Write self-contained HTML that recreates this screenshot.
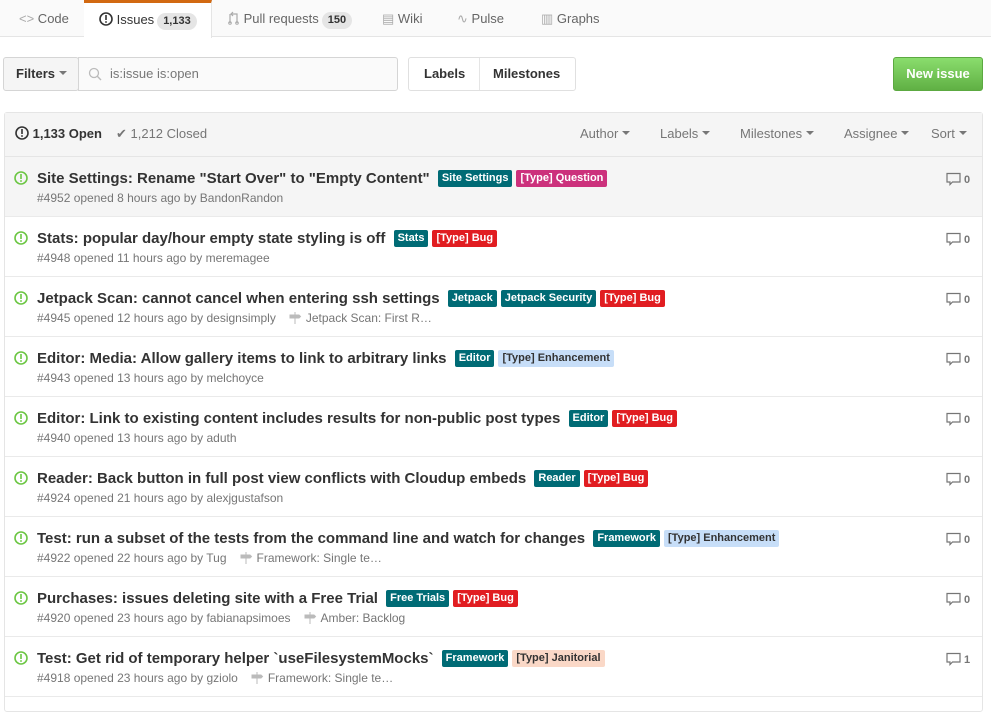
<!DOCTYPE html>
<html><head><meta charset="utf-8"><style>
*{box-sizing:border-box;margin:0;padding:0}
body{width:991px;height:695px;overflow:hidden;background:#fff;font-family:"Liberation Sans",Arial,sans-serif;color:#333;position:relative;font-size:13px}
.a{position:absolute;white-space:nowrap}
.tabs{position:absolute;left:0;top:0;width:991px;height:37px;background:#fafafa;border-bottom:1px solid #e5e5e5}
.tab{position:absolute;top:0;height:37px;line-height:37px;font-size:13px;color:#666}
.cnt{display:inline-block;background:#e5e5e5;border-radius:10px;padding:0 6px;font-size:11px;font-weight:bold;line-height:17px;color:#333;margin-left:3px}
.btn{position:absolute;border:1px solid #d5d5d5;border-radius:3px;background:#f5f5f5;font-weight:bold;font-size:13px;line-height:32px;color:#333}
.box{position:absolute;left:4px;top:112px;width:979px;height:600px;border:1px solid #e5e5e5;border-radius:3px}
.hdr{position:absolute;left:0;top:0;width:977px;height:44px;background:#f5f5f5;border-bottom:1px solid #e5e5e5}
.row{position:absolute;left:0;width:977px;height:60px;border-bottom:1px solid #eaeaea}
.t{position:absolute;left:32px;top:13px;font-size:15px;font-weight:bold;color:#333;white-space:nowrap;letter-spacing:0}
.l{display:inline-block;font-size:11px;font-weight:bold;line-height:17px;padding:0 4px;border-radius:2px;color:#fff;vertical-align:2px;margin-left:4px;letter-spacing:0}
.tl{background:#006b75}.bug{background:#e11d21}.q{background:#cc317c}.enh{background:#c7def8;color:#333}.jan{background:#fad8c7;color:#333}
.m{position:absolute;left:32px;top:34px;font-size:12px;color:#767676;white-space:nowrap}
.ic{position:absolute;left:9px;top:14px}
.cm{position:absolute;left:941px;top:15px;font-size:11px;font-weight:bold;color:#767676}
.dd::after{content:"";display:inline-block;border:4px solid transparent;border-top-color:#777;border-bottom:0;margin-left:4px;vertical-align:3px}
</style></head><body>
<div class="tabs">
 <div class="tab" style="left:19px"><span style="color:#aaa">&lt;&gt;</span> Code</div>
 <div class="tab" style="left:84px;width:128px;background:#fff;border-top:3px solid #d26911;border-right:1px solid #e5e5e5;height:38px;line-height:33px;color:#333;padding-left:15px"><svg width="14" height="14" viewBox="0 0 14 14" style="vertical-align:-2px"><circle cx="7" cy="7" r="6" fill="none" stroke="#333" stroke-width="1.6"/><rect x="6.2" y="3" width="1.6" height="5" fill="#333"/><rect x="6.2" y="9.2" width="1.6" height="1.6" fill="#333"/></svg> Issues<span class="cnt">1,133</span></div>
 <div class="tab" style="left:228px"><svg width="12" height="14" viewBox="0 0 12 14" style="vertical-align:-2px"><path d="M2 3v9M9 5v7M5 1l-2 2 2 2M3 3h6v2" fill="none" stroke="#aaa" stroke-width="1.2"/><circle cx="2" cy="12" r="1.3" fill="none" stroke="#aaa"/><circle cx="9" cy="12" r="1.3" fill="none" stroke="#aaa"/></svg> Pull requests<span class="cnt">150</span></div>
 <div class="tab" style="left:382px"><span style="color:#aaa">▤</span> Wiki</div>
 <div class="tab" style="left:457px"><span style="color:#aaa">∿</span> Pulse</div>
 <div class="tab" style="left:541px"><span style="color:#aaa">▥</span> Graphs</div>
</div>
<div class="btn" style="left:3px;top:57px;width:76px;height:34px;padding-left:12px" ><span class="dd">Filters</span></div>
<div class="a" style="left:78px;top:57px;width:320px;height:34px;border:1px solid #d5d5d5;border-radius:0 3px 3px 0;background:#fafafa;line-height:32px;padding-left:31px;color:#777;font-size:13px">is:issue is:open
 <svg class="a" style="left:9px;top:9px" width="14" height="14"><circle cx="6" cy="6" r="4.5" fill="none" stroke="#bbb" stroke-width="1.3"/><line x1="9.3" y1="9.3" x2="13" y2="13" stroke="#bbb" stroke-width="1.4"/></svg></div>
<div class="btn" style="left:408px;top:57px;width:168px;height:34px;background:#fff;border-color:#e0e0e0"><span class="a" style="left:15px">Labels</span><span class="a" style="left:70px;top:0;height:32px;border-left:1px solid #e5e5e5"></span><span class="a" style="left:84px">Milestones</span></div>
<div class="a" style="left:893px;top:57px;width:90px;height:34px;border:1px solid #5ca941;border-radius:3px;background:linear-gradient(#8add6d,#60b044);color:#fff;font-weight:bold;font-size:13px;line-height:32px;text-align:center">New issue</div>
<div class="box">
 <div class="hdr">
  <div class="a" style="left:10px;top:13px;font-weight:bold;font-size:13px"><svg width="14" height="14" viewBox="0 0 14 14" style="vertical-align:-2px"><circle cx="7" cy="7" r="6" fill="none" stroke="#333" stroke-width="1.6"/><rect x="6.2" y="3" width="1.6" height="5" fill="#333"/><rect x="6.2" y="9.2" width="1.6" height="1.6" fill="#333"/></svg> 1,133 Open</div>
  <div class="a" style="left:111px;top:13px;color:#767676;font-size:13px">✔ 1,212 Closed</div>
  <div class="a dd" style="left:575px;top:13px;color:#767676">Author</div>
  <div class="a dd" style="left:655px;top:13px;color:#767676">Labels</div>
  <div class="a dd" style="left:735px;top:13px;color:#767676">Milestones</div>
  <div class="a dd" style="left:839px;top:13px;color:#767676">Assignee</div>
  <div class="a dd" style="left:926px;top:13px;color:#767676">Sort</div>
 </div>
 <div id="rows"></div>
</div>
<script>
var R=[
['Site Settings: Rename "Start Over" to "Empty Content"',[['tl','Site Settings'],['q','[Type] Question']],'#4952 opened 8 hours ago by BandonRandon','','0'],
['Stats: popular day/hour empty state styling is off',[['tl','Stats'],['bug','[Type] Bug']],'#4948 opened 11 hours ago by meremagee','','0'],
['Jetpack Scan: cannot cancel when entering ssh settings',[['tl','Jetpack'],['tl','Jetpack Security'],['bug','[Type] Bug']],'#4945 opened 12 hours ago by designsimply','Jetpack Scan: First R…','0'],
['Editor: Media: Allow gallery items to link to arbitrary links',[['tl','Editor'],['enh','[Type] Enhancement']],'#4943 opened 13 hours ago by melchoyce','','0'],
['Editor: Link to existing content includes results for non-public post types',[['tl','Editor'],['bug','[Type] Bug']],'#4940 opened 13 hours ago by aduth','','0'],
['Reader: Back button in full post view conflicts with Cloudup embeds',[['tl','Reader'],['bug','[Type] Bug']],'#4924 opened 21 hours ago by alexjgustafson','','0'],
['Test: run a subset of the tests from the command line and watch for changes',[['tl','Framework'],['enh','[Type] Enhancement']],'#4922 opened 22 hours ago by Tug','Framework: Single te…','0'],
['Purchases: issues deleting site with a Free Trial',[['tl','Free Trials'],['bug','[Type] Bug']],'#4920 opened 23 hours ago by fabianapsimoes','Amber: Backlog','0'],
['Test: Get rid of temporary helper `useFilesystemMocks`',[['tl','Framework'],['jan','[Type] Janitorial']],'#4918 opened 23 hours ago by gziolo','Framework: Single te…','1']];
var h='';R.forEach(function(r,i){
h+='<div class="row" style="top:'+(44+60*i)+'px;'+(i==0?'background:#f5f5f5':'')+'">'+
'<svg class="ic" width="14" height="14" viewBox="0 0 14 14"><circle cx="7" cy="7" r="6" fill="none" stroke="#6cc644" stroke-width="1.6"/><rect x="6.2" y="3" width="1.6" height="5" fill="#6cc644"/><rect x="6.2" y="9.2" width="1.6" height="1.6" fill="#6cc644"/></svg>'+
'<div class="t">'+r[0].replace(/"/g,'&quot;')+' '+r[1].map(function(l){return '<span class="l '+l[0]+'">'+l[1]+'</span>'}).join('')+'</div>'+
'<div class="m">'+r[2]+(r[3]?'<svg width="14" height="14" viewBox="0 0 14 14" style="margin:0 4px 0 12px;vertical-align:-3px"><path d="M7 1v12M2 4h9l1.5 1.5L11 7H2z" fill="#bbb" stroke="#bbb"/></svg>'+r[3]:'')+'</div>'+
'<div class="cm"><svg width="15" height="14" viewBox="0 0 15 14" style="vertical-align:-3px"><path d="M1 1.5h13v8.5H6.5L4 12.5V10H1z" fill="none" stroke="#767676" stroke-width="1.2"/></svg> '+r[4]+'</div></div>';});
document.getElementById('rows').innerHTML=h;
</script>
</body></html>
